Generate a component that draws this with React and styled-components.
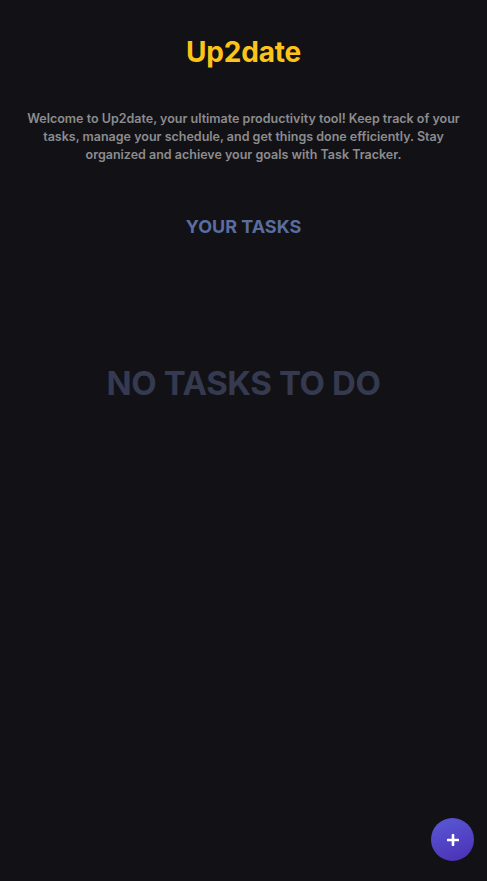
import React from "react";
import styled, { createGlobalStyle } from "styled-components";

const Global = createGlobalStyle`
  html, body { margin: 0; padding: 0; background: #121216; }
  body { font-family: Inter, "Noto Sans", sans-serif; }
  #root { min-height: 881px; }
`;

const Page = styled.div`
  min-height: 881px;
  background: #121216;
  display: flex;
  flex-direction: column;
  align-items: center;
  padding: 0 24px;
  box-sizing: border-box;
  position: relative;
`;

const Title = styled.h1`
  margin: 35px 0 0;
  font-size: 28px;
  line-height: 34px;
  font-weight: 700;
  color: #fcc419;
  letter-spacing: -0.2px;
`;

const Intro = styled.p`
  margin: 41px 0 0;
  font-size: 12.5px;
  line-height: 18px;
  font-weight: 600;
  color: #8c8c8f;
  text-align: center;
`;

const Heading = styled.h2`
  margin: 51px 0 0;
  font-size: 18px;
  line-height: 24px;
  font-weight: 700;
  color: #5a6d9e;
`;

const Empty = styled.div`
  margin-top: 124px;
  font-size: 33px;
  line-height: 40px;
  font-weight: 700;
  color: #353a50;
  letter-spacing: -0.4px;
`;

const Fab = styled.button`
  position: fixed;
  right: 13px;
  top: 818px;
  width: 43px;
  height: 43px;
  border-radius: 50%;
  border: none;
  background: linear-gradient(160deg, #5a5ad6 0%, #4a2fb3 100%);
  display: flex;
  align-items: center;
  justify-content: center;
  padding: 0;
  cursor: pointer;
`;

export default function App() {
  return (
    <>
      <Global />
      <Page>
        <Title>Up2date</Title>
        <Intro>
          Welcome to Up2date, your ultimate productivity tool! Keep track of your
          tasks, manage your schedule, and get things done efficiently. Stay
          organized and achieve your goals with Task Tracker.
        </Intro>
        <Heading>YOUR TASKS</Heading>
        <Empty>NO TASKS TO DO</Empty>
        <Fab aria-label="Add task">
          <svg width="12" height="12" viewBox="0 0 12 12">
            <path d="M6 1v10M1 6h10" stroke="#fff" strokeWidth="2.6" strokeLinecap="round" />
          </svg>
        </Fab>
      </Page>
    </>
  );
}
